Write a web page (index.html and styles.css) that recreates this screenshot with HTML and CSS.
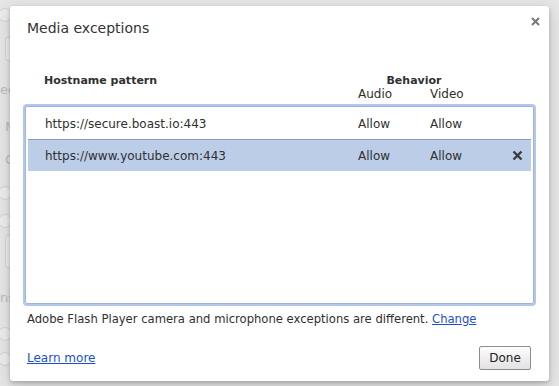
FILE: index.html
```html
<!DOCTYPE html>
<html lang="en">
<head>
  <meta charset="UTF-8">
  <meta name="viewport" content="width=device-width, initial-scale=1.0">
  <link rel="stylesheet" href="styles.css">
</head>
<body>
  <!-- settings page behind the overlay -->
  <div class="backdrop">
    <span class="bg-radio r1"></span>
    <span class="bg-box b1"></span>
    <span class="bg-text t1">ec</span>
    <span class="bg-text t2">M</span>
    <span class="bg-text t3">C</span>
    <span class="bg-radio r2"></span>
    <span class="bg-radio r3"></span>
    <span class="bg-box b2"></span>
    <span class="bg-text t4">ns</span>
    <span class="bg-radio r4"></span>
    <span class="bg-radio r5"></span>
  </div>

  <div class="dialog">
    <div class="title-bar">
      <h1 class="title">Media exceptions</h1>
      <svg class="close" width="9" height="9" viewBox="0 0 9 9">
        <path d="M1 1L8 8M8 1L1 8" stroke="#777" stroke-width="2"/>
      </svg>
    </div>

    <div class="list-head">
      <div class="col-host">Hostname pattern</div>
      <div class="col-behavior">
        <div class="behavior-label">Behavior</div>
        <div class="behavior-sub">
          <span class="sub-audio">Audio</span>
          <span class="sub-video">Video</span>
        </div>
      </div>
    </div>

    <div class="list">
      <div class="row">
        <span class="cell-host">https://secure.boast.io:443</span>
        <span class="cell">Allow</span>
        <span class="cell">Allow</span>
        <span class="cell-del"></span>
      </div>
      <div class="row selected">
        <span class="cell-host">https://www.youtube.com:443</span>
        <span class="cell">Allow</span>
        <span class="cell">Allow</span>
        <span class="cell-del">
          <svg width="11" height="11" viewBox="0 0 11 11">
            <path d="M1.5 1.5L9.5 9.5M9.5 1.5L1.5 9.5" stroke="#3a3a3a" stroke-width="2.4"/>
          </svg>
        </span>
      </div>
    </div>

    <p class="note">Adobe Flash Player camera and microphone exceptions are different. <a href="#">Change</a></p>

    <div class="footer">
      <a href="#">Learn more</a>
      <button class="button">Done</button>
    </div>
  </div>
</body>
</html>
```

FILE: styles.css
```css
body {
  font-family: 'DejaVu Sans', sans-serif;
  font-size: 12px;
  color: #303030;
  background-color: #e6e6e6;
  margin: 0;
  width: 559px;
  height: 386px;
  overflow: hidden;
  position: relative;
}
.backdrop {
  position: absolute;
  left: 0;
  top: 0;
  width: 40px;
  height: 386px;
  color: #bcbcbc;
}
.bg-radio {
  position: absolute;
  left: -2px;
  width: 12px;
  height: 12px;
  border: 1px solid #d2d2d2;
  border-radius: 50%;
  background: #ececec;
}
.r1 { top: 8px; }
.r2 { top: 186px; }
.r3 { top: 214px; }
.r4 { top: 327px; }
.r5 { top: 352px; }
.bg-box {
  position: absolute;
  left: 5px;
  width: 30px;
  border: 1px solid #d4d4d4;
  border-radius: 2px;
  background: #ececec;
}
.b1 { top: 37px; height: 22px; }
.b2 { top: 235px; height: 31px; }
.bg-text {
  position: absolute;
  font-size: 13px;
}
.t1 { top: 82px; left: 0; }
.t2 { top: 119px; left: 5px; }
.t3 { top: 152px; left: 5px; }
.t4 { top: 290px; left: 0; }

.dialog {
  position: absolute;
  left: 10px;
  top: 6px;
  width: 539px;
  height: 375px;
  box-sizing: border-box;
  background-color: #ffffff;
  border-radius: 3px;
  box-shadow: 0 2px 4px rgba(0, 0, 0, 0.2), 0 4px 16px rgba(0, 0, 0, 0.15);
  padding: 13px 17px 11px 17px;
  display: flex;
  flex-direction: column;
}
.title-bar {
  display: flex;
  justify-content: space-between;
  align-items: flex-start;
}
.title {
  font-size: 14px;
  font-weight: normal;
  color: #333;
  margin: 0;
  line-height: 18px;
}
.close {
  margin: -2px -8px 0 0;
}

.list-head {
  display: flex;
  margin-top: 36px;
  padding-left: 17px;
}
.col-host {
  width: 314px;
  font-size: 11px;
  font-weight: bold;
  line-height: 16px;
}
.col-behavior {
  width: 112px;
}
.behavior-label {
  font-size: 11px;
  font-weight: bold;
  text-align: center;
  line-height: 16px;
}
.behavior-sub {
  display: flex;
  line-height: 15px;
  margin-top: -2px;
}
.sub-audio {
  width: 72px;
}

.list {
  margin: 4px -2px 0 -2px;
  height: 193px;
  border: 1px solid #9fb5de;
  box-shadow: 0 0 0 2px #b4c7ea;
  border-radius: 2px;
  padding: 1px 0 2px 0;
}
.row {
  display: grid;
  grid-template-columns: 330px 72px 78px 23px;
  align-items: center;
  height: 31px;
  margin: 0 2px;
}
.row + .row {
  border-top: 1px solid #8c9dbb;
}
.selected {
  background-color: #bccde8;
}
.cell-host {
  padding-left: 17px;
}
.cell-del {
  display: flex;
  justify-content: center;
  margin-left: -4px;
}

.note {
  margin: 8px 0 0 0;
  line-height: 15px;
  font-size: 11.6px;
}
a {
  color: #1a4fcf;
}
.footer {
  margin-top: auto;
  display: flex;
  justify-content: space-between;
  align-items: center;
}
.button {
  font-family: 'DejaVu Sans', sans-serif;
  font-size: 12px;
  color: #222;
  background: linear-gradient(#fdfdfd, #e2e2e2);
  border: 1px solid #8e8e8e;
  border-radius: 2px;
  padding: 0;
  width: 52px;
  height: 24px;
  margin-right: 1px;
}
```
